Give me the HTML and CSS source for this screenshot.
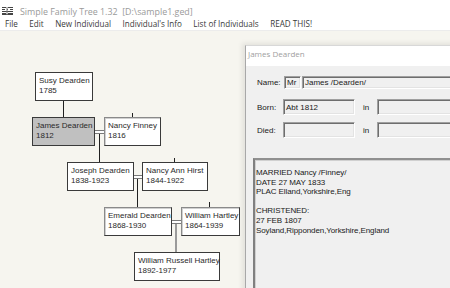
FILE: index.html
```html
<!DOCTYPE html>
<html>
<head>
<meta charset="utf-8">
<link rel="stylesheet" href="styles.css">
</head>
<body>
<div class="app">
  <div class="titlebar">
    <svg class="appicon" width="11" height="8" viewBox="0 0 11 8">
      <path d="M0 0.5H4M6 0.5H11M0 2.5H3M5 2.5H6M8 2.5H11M0 4.5H11M0 6.5H4M6 6.5H11M0 7.5H11" stroke="#444" stroke-width="1" fill="none"/>
      <path d="M5 0V8" stroke="#777" stroke-width="1"/>
    </svg>
    <span class="title">Simple Family Tree 1.32&nbsp; [D:\sample1.ged]</span>
  </div>
  <div class="menubar">
    <span>File</span>
    <span>Edit</span>
    <span>New Individual</span>
    <span>Individual's Info</span>
    <span>List of Individuals</span>
    <span>READ THIS!</span>
  </div>
  <div class="canvas">
    <div class="ln v" style="left:63px;top:69px;height:17px"></div>
    <div class="ln v" style="left:132px;top:82px;height:4px"></div>
    <div class="dbl" style="left:94px;top:99px;width:10px"></div>
    <div class="ln v" style="left:99px;top:103px;height:28px"></div>
    <div class="ln v" style="left:174px;top:127px;height:4px"></div>
    <div class="dbl" style="left:133px;top:144px;width:9px"></div>
    <div class="ln v" style="left:137px;top:148px;height:28px"></div>
    <div class="ln v" style="left:209px;top:171px;height:5px"></div>
    <div class="dbl" style="left:171px;top:189px;width:10px"></div>
    <div class="ln vg" style="left:175px;top:193px;height:28px"></div>

    <div class="node" style="left:35px;top:41px;width:58px">Susy Dearden<br>1785</div>
    <div class="node sel" style="left:32px;top:86px;width:63px">James Dearden<br>1812</div>
    <div class="node soft" style="left:104px;top:86px;width:57px">Nancy Finney<br>1816</div>
    <div class="node" style="left:67px;top:131px;width:67px">Joseph Dearden<br>1838-1923</div>
    <div class="node" style="left:142px;top:131px;width:66px">Nancy Ann Hirst<br>1844-1922</div>
    <div class="node soft" style="left:104px;top:176px;width:68px">Emerald Dearden<br>1868-1930</div>
    <div class="node soft" style="left:181px;top:176px;width:59px">William Hartley<br>1864-1939</div>
    <div class="node" style="left:134px;top:221px;width:86px">William Russell Hartley<br>1892-1977</div>
  </div>

  <div class="dialog">
    <div class="dtitle">James Dearden</div>
    <div class="dbody">
      <div class="row r1">
        <span class="lbl">Name:</span>
        <div class="field mr">Mr</div>
        <div class="field grow">James /Dearden/</div>
      </div>
      <div class="row r2">
        <span class="lbl">Born:</span>
        <div class="field date">Abt 1812</div>
        <span class="in">in</span>
        <div class="field grow"></div>
      </div>
      <div class="row r3">
        <span class="lbl">Died:</span>
        <div class="field date"></div>
        <span class="in">in</span>
        <div class="field grow"></div>
      </div>
      <div class="notes">MARRIED Nancy /Finney/<br>DATE 27 MAY 1833<br>PLAC Elland,Yorkshire,Eng<br><br>CHRISTENED:<br>27 FEB 1807<br>Soyland,Ripponden,Yorkshire,England</div>
    </div>
  </div>
</div>
</body>
</html>
```
FILE: styles.css
```css
html, body {
  margin: 0;
  padding: 0;
}
body {
  width: 450px;
  height: 288px;
  overflow: hidden;
  background: #fff;
}
.app {
  position: relative;
  width: 450px;
  height: 288px;
  display: flex;
  flex-direction: column;
  overflow: hidden;
}
.titlebar {
  height: 17px;
  display: flex;
  align-items: center;
  padding-left: 2px;
  background: #fff;
  box-sizing: border-box;
  padding-top: 5px;
}
.appicon {
  margin-right: 7px;
}
.title {
  font-family: "Open Sans", sans-serif;
  font-size: 8.9px;
  color: #9a9a9a;
}
.menubar {
  height: 13px;
  display: flex;
  align-items: center;
  gap: 11.5px;
  padding-left: 5px;
  font-family: "Open Sans", sans-serif;
  font-size: 8.1px;
  color: #3a3a3a;
  background: #fff;
  border-bottom: 1px solid #ececec;
}
.canvas {
  position: relative;
  flex: 1;
  background: #f6f5ef;
}
.node {
  position: absolute;
  height: 29px;
  box-sizing: border-box;
  border: 1px solid #3a3a3a;
  background: #fff;
  padding: 3px 3px;
  font-family: "Liberation Sans", sans-serif;
  font-size: 8px;
  line-height: 10px;
  color: #2a2a2a;
  white-space: nowrap;
}
.node.sel {
  background: #c0c0c0;
}
.node.soft {
  border-left-color: #8a8a8a;
  border-top-color: #8a8a8a;
  box-shadow: inset 1px 1px 0 #d0d0d0;
}
.ln {
  position: absolute;
  background: #202020;
}
.ln.v {
  width: 1px;
}
.ln.vg {
  width: 2px;
  background: #9a9a9a;
}
.dbl {
  position: absolute;
  height: 4px;
  box-sizing: border-box;
  border-top: 1px solid #7a7a7a;
  border-bottom: 1px solid #7a7a7a;
  background: #fdfdfd;
}
.dialog {
  position: absolute;
  left: 245px;
  top: 45px;
  width: 215px;
  height: 250px;
  display: flex;
  flex-direction: column;
  border-left: 1px solid #a8a8a8;
  border-top: 1px solid #d8d8d8;
  box-shadow: -3px -2px 5px rgba(0,0,0,0.08);
}
.dtitle {
  height: 20px;
  background: #fff;
  font-family: "Open Sans", sans-serif;
  font-size: 8px;
  color: #a0a0a0;
  padding-left: 2px;
  line-height: 16px;
}
.dbody {
  flex: 1;
  background: #f0f0f0;
  display: flex;
  flex-direction: column;
  padding-left: 6px;
  font-family: "Liberation Sans", sans-serif;
  font-size: 8px;
  color: #202020;
}
.row {
  display: flex;
  align-items: center;
  padding-left: 5px;
}
.r1 { margin-top: 10px; height: 13px; }
.r2 { margin-top: 10px; height: 16px; }
.r3 { margin-top: 7px; height: 16px; }
.lbl {
  width: 27px;
  flex: none;
}
.r2 .lbl, .r3 .lbl { width: 26px; }
.field {
  box-sizing: border-box;
  height: 100%;
  border: 1px solid;
  border-color: #a0a0a0 #fff #fff #a0a0a0;
  box-shadow: inset 1px 1px 0 #6e6e6e, inset -1px -1px 0 #e3e3e3;
  background: #f0f0f0;
  padding-left: 2px;
  display: flex;
  align-items: center;
  flex: none;
}
.mr { width: 17px; margin-right: 1px; }
.date { width: 72px; }
.grow { flex: 1; }
.in {
  width: 22px;
  flex: none;
  text-align: center;
}
.notes {
  margin-top: 20px;
  flex: 1;
  margin-left: 1px;
  border-left: 2px solid #808080;
  border-top: 2px solid #909090;
  box-shadow: inset 1px 1px 0 #d0d0d0;
  padding: 8px 0 0 1px;
  line-height: 9.6px;
  white-space: nowrap;
  letter-spacing: -0.1px;
}
```
